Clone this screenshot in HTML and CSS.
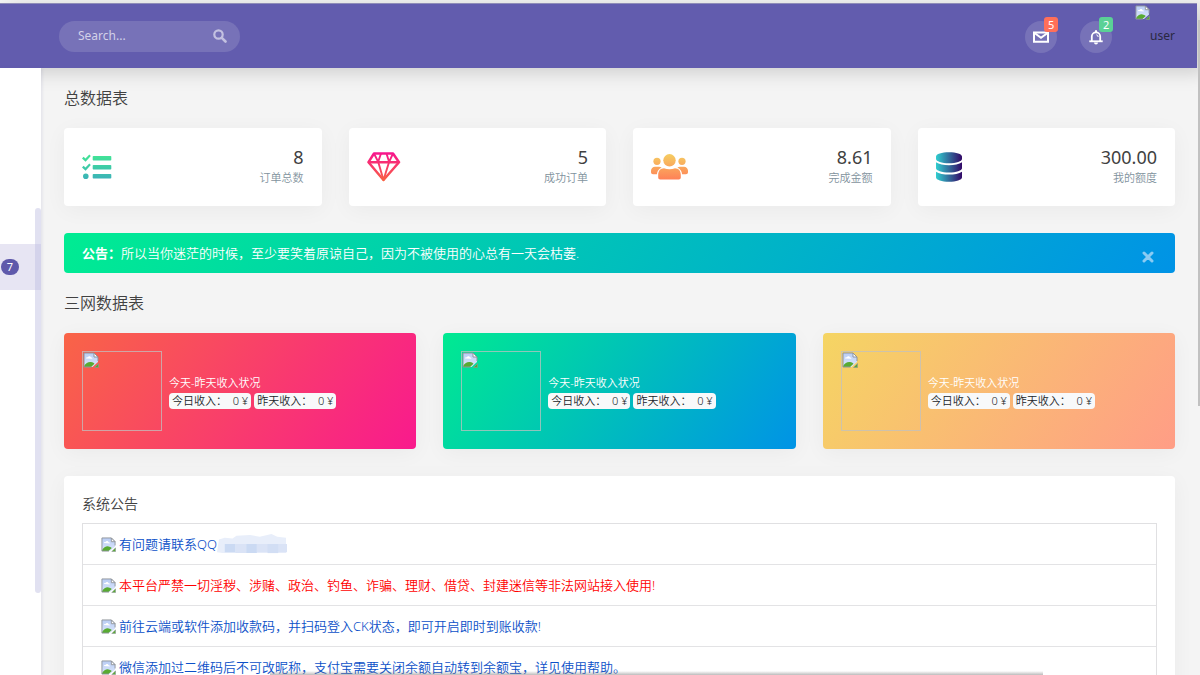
FILE: index.html
```html
<!DOCTYPE html>
<html lang="zh-CN">
<head>
<meta charset="utf-8">
<title>总数据表</title>
<link rel="stylesheet" href="styles.css">
</head>
<body>
<svg class="defs" width="0" height="0" aria-hidden="true">
  <defs>
    <linearGradient id="sky" x1="0" y1="0" x2="0" y2="1"><stop offset="0" stop-color="#b9cdf5"/><stop offset="1" stop-color="#dbe6fb"/></linearGradient>
    <linearGradient id="green" x1="0" y1="0" x2="0" y2="1"><stop offset="0" stop-color="#42e695"/><stop offset="1" stop-color="#3bb2b8"/></linearGradient>
    <linearGradient id="pink" gradientUnits="userSpaceOnUse" x1="0" y1="0" x2="0" y2="30"><stop offset="0" stop-color="#f7138f"/><stop offset="1" stop-color="#f9643f"/></linearGradient>
    <linearGradient id="orange" gradientUnits="userSpaceOnUse" x1="0" y1="0" x2="0" y2="26"><stop offset="0" stop-color="#f5ce62"/><stop offset="1" stop-color="#ff7f57"/></linearGradient>
    <linearGradient id="blue"><stop offset="0" stop-color="#30cfd0"/><stop offset="1" stop-color="#330867"/></linearGradient>
    <symbol id="broken" viewBox="0 0 16 16">
      <path d="M1 1h10l4 4v5L9.500 15H1z" fill="url(#sky)"/>
      <path d="M3 6.500c0-1 1-1.500 1.800-1.200C5.400 3.900 7.600 4 8 5.600c1 0 1.400.5 1.400 1.200z" fill="#fff"/>
      <path d="M1 14c2-3 4.500-4.500 7-4 1.500 0 2.500.8 3.500 1.800L8 15H1z" fill="#58ab32"/>
      <path d="M8.500 15H1V1h10l4 4v4" fill="none" stroke="#8f949b"/>
      <path d="M11 1v4h4z" fill="#fff" stroke="#8f949b"/>
      <path d="M15.500 11.500v4h-4z" fill="#58ab32" stroke="#8f949b" stroke-width=".6"/>
    </symbol>
  </defs>
</svg>

<header class="topbar">
  <form class="search">
    <input class="search-input" type="text" placeholder="Search..." aria-label="Search">
    <button class="search-button" type="button" aria-label="搜索">
      <svg width="14" height="14" viewBox="0 0 14 14"><circle cx="5.500" cy="5.500" r="4.200" fill="none" stroke="currentColor" stroke-width="2.200"/><path d="M8.800 8.800l3.700 3.700" stroke="currentColor" stroke-width="2.600" stroke-linecap="round"/></svg>
    </button>
  </form>
  <nav class="actions">
    <button class="round" type="button" aria-label="消息">
      <svg width="16" height="12" viewBox="0 0 16 12" fill="none" stroke="#fff" stroke-width="2"><path d="M1 1.500h14v9.300H1z"/><path d="M1.500 2L8 6.800 14.500 2"/></svg>
      <span class="count count-red">5</span>
    </button>
    <button class="round" type="button" aria-label="通知">
      <svg width="16" height="16" viewBox="0 0 16 16"><path d="M3.800 12V7.500a4.200 4.200 0 0 1 8.400 0V12" fill="none" stroke="#fff" stroke-width="1.800"/><path d="M1.300 12.300h13.400" stroke="#fff" stroke-width="1.800"/><path d="M7 3V1.300h2V3zM6 13.500h4a2 2 0 0 1-4 0z" fill="#fff"/><path d="M8.300 5.800a2 2 0 0 1 1.800 2.200" fill="none" stroke="#fff"/></svg>
      <span class="count count-green">2</span>
    </button>
    <a class="user" href="#"><svg class="user-icon" width="15" height="15"><use href="#broken"/></svg><span>user</span></a>
  </nav>
</header>

<div class="shell">
  <aside class="sidebar">
    <a class="side-item" href="#"><span class="side-badge">7</span></a>
    <div class="side-scroll"></div>
  </aside>

  <main class="main">
    <h1 class="heading">总数据表</h1>
    <section class="stats">
      <article class="card stat">
        <svg width="30" height="26" viewBox="0 0 30 26"><path fill="url(#green)" d="M11.500 2h17a.8.8 0 0 1 .8.8v2.900a.8.8 0 0 1-.8.800h-17a.8.8 0 0 1-.8-.8V2.800a.8.8 0 0 1 .8-.8zM11.500 11h17a.8.8 0 0 1 .8.8v2.900a.8.8 0 0 1-.8.800h-17a.8.8 0 0 1-.8-.8v-2.900a.8.8 0 0 1 .8-.8zM11.500 20h17a.8.8 0 0 1 .8.8v2.900a.8.8 0 0 1-.8.800h-17a.8.8 0 0 1-.8-.8v-2.900a.8.8 0 0 1 .8-.8zM0 4.400l1.600-1.600 1.900 1.800L7.300.5l1.500 1.500-5.200 5.700zM0 13.400l1.600-1.600 1.900 1.800 3.800-4.100 1.500 1.500-5.200 5.700zM3.800 19.500a2.800 2.800 0 1 1 0 5.600 2.800 2.800 0 0 1 0-5.600z"/></svg>
        <div class="stat-text"><p class="value">8</p><p class="label">订单总数</p></div>
      </article>
      <article class="card stat">
        <svg width="34" height="30" viewBox="0 0 34 30" fill="none" stroke="url(#pink)" stroke-width="2.500" stroke-linejoin="round"><path d="M7 1.500h19l6 8.700L16.500 28 1.500 10.200z"/><path d="M1.500 10.200L31.900 10.300"/><path d="M7 1.500l4.300 8.700L16.500 28 22 10.200l4-8.700M14 1.500l-3 8.700M19.500 1.500l2.700 8.700" stroke-width="1.900"/></svg>
        <div class="stat-text"><p class="value">5</p><p class="label">成功订单</p></div>
      </article>
      <article class="card stat">
        <svg width="37" height="26" viewBox="0 0 37 26" fill="url(#orange)"><circle cx="18.500" cy="6.300" r="6.200"/><circle cx="6" cy="7.300" r="3.600"/><circle cx="31" cy="7.300" r="3.600"/><path d="M13 14.200c3.500 1.300 7.500 1.300 11 0 3.500 0 5.800 2.800 5.800 6.500v2.800c0 1.200-.9 2-2 2H9.200c-1.200 0-2-.8-2-2v-2.800c0-3.700 2.300-6.500 5.800-6.500z"/><path d="M4 12.700h4c1 0 1.900.3 2.600.9-2.800 1.300-4.300 3.600-4.700 6.600H2c-1.100 0-2-.8-2-2v-1.500c0-2.200 1.800-4 4-4zM33 12.700h-4c-1 0-1.900.3-2.600.9 2.800 1.300 4.300 3.600 4.700 6.600H35c1.100 0 2-.8 2-2v-1.500c0-2.200-1.800-4-4-4z"/></svg>
        <div class="stat-text"><p class="value">8.61</p><p class="label">完成金额</p></div>
      </article>
      <article class="card stat">
        <svg width="26" height="30" viewBox="0 0 448 512"><path fill="url(#blue)" d="M448 73.143v45.714C448 159.143 347.667 192 224 192S0 159.143 0 118.857V73.143C0 32.857 100.333 0 224 0s224 32.857 224 73.143zM448 176v102.857C448 319.143 347.667 352 224 352S0 319.143 0 278.857V176c48.125 33.143 136.208 48.572 224 48.572S399.874 209.143 448 176zm0 160v102.857C448 479.143 347.667 512 224 512S0 479.143 0 438.857V336c48.125 33.143 136.208 48.572 224 48.572S399.874 369.143 448 336z"/></svg>
        <div class="stat-text"><p class="value">300.00</p><p class="label">我的额度</p></div>
      </article>
    </section>

    <div class="notice" role="alert">
      <p class="notice-text"><strong>公告：</strong>所以当你迷茫的时候，至少要笑着原谅自己，因为不被使用的心总有一天会枯萎.</p>
      <button class="close" type="button" aria-label="关闭"><svg width="12" height="12" viewBox="0 0 12 12"><path d="M2 2l8 8M10 2l-8 8" stroke="currentColor" stroke-width="3" stroke-linecap="round"/></svg></button>
    </div>

    <h2 class="heading">三网数据表</h2>
    <section class="incomes">
      <article class="card income income-red">
        <div class="picture"><svg width="16" height="16"><use href="#broken"/></svg></div>
        <div><p class="income-title">今天-昨天收入状况</p><p class="pills"><span class="pill">今日收入：  0 ¥</span><span class="pill">昨天收入：  0 ¥</span></p></div>
      </article>
      <article class="card income income-green">
        <div class="picture"><svg width="16" height="16"><use href="#broken"/></svg></div>
        <div><p class="income-title">今天-昨天收入状况</p><p class="pills"><span class="pill">今日收入：  0 ¥</span><span class="pill">昨天收入：  0 ¥</span></p></div>
      </article>
      <article class="card income income-yellow">
        <div class="picture"><svg width="16" height="16"><use href="#broken"/></svg></div>
        <div><p class="income-title">今天-昨天收入状况</p><p class="pills"><span class="pill">今日收入：  0 ¥</span><span class="pill">昨天收入：  0 ¥</span></p></div>
      </article>
    </section>

    <section class="card panel">
      <h2 class="panel-title">系统公告</h2>
      <ul class="list">
        <li class="row"><svg class="row-icon" width="15" height="15"><use href="#broken"/></svg><a href="#">有问题请联系QQ</a>
          <svg width="70" height="20" viewBox="0 0 72 22" preserveAspectRatio="none"><path d="M2 6l6-2 8 1 4-3 14-1 10 2 12-3 6 3 9 1v17H6l-6-1z" fill="#e8eefa"/><path d="M8 11h11v9H8zM30 11h11v10H30z" fill="#cbdaf3"/><path d="M19 11h11v10H19zM41 11h31v9H41z" fill="#dae3f6"/><path d="M52 11h11v10H52z" fill="#d2def4"/></svg></li>
        <li class="row"><svg class="row-icon" width="15" height="15"><use href="#broken"/></svg><a class="warn" href="#">本平台严禁一切淫秽、涉赌、政治、钓鱼、诈骗、理财、借贷、封建迷信等非法网站接入使用!</a></li>
        <li class="row"><svg class="row-icon" width="15" height="15"><use href="#broken"/></svg><a href="#">前往云端或软件添加收款码，并扫码登入CK状态，即可开启即时到账收款!</a></li>
        <li class="row"><svg class="row-icon" width="15" height="15"><use href="#broken"/></svg><a href="#">微信添加过二维码后不可改昵称，支付宝需要关闭余额自动转到余额宝，详见使用帮助。</a></li>
      </ul>
    </section>
  </main>
</div>
<div class="page-scroll"></div>
<div class="edge-shadow"></div>
</body>
</html>
```
FILE: styles.css
```css
* { box-sizing: border-box; }
html { height: 100%; overflow: hidden; }
body {
  margin: 0;
  min-height: 100%;
  padding-top: 3px;
  display: flex;
  flex-direction: column;
  background: #f4f4f4;
  color: #414141;
  font: 350 13px/20px "Noto Sans", "Noto Sans CJK SC", sans-serif;
}
h1, h2, p, ul { margin: 0; padding: 0; font-weight: 350; }
a { color: #0b50c8; text-decoration: none; }
button { border: 0; padding: 0; cursor: pointer; font: inherit; }
svg { display: block; flex: none; }
.defs { position: absolute; }

.topbar {
  position: relative;
  z-index: 1;
  display: flex;
  align-items: center;
  justify-content: space-between;
  height: 65px;
  margin-right: 3px;
  padding: 0 22px 0 59px;
  background: #625cae;
  border-top: 1px solid #8f8cb8;
  box-shadow: 8px 4px 18px rgba(0, 0, 0, .17);
}
.search {
  display: flex;
  align-items: center;
  width: 181px;
  height: 31px;
  padding: 0 13px 0 19px;
  border-radius: 16px;
  background: #7772b8;
}
.search-input {
  flex: 1;
  min-width: 0;
  padding: 0;
  border: 0;
  outline: 0;
  background: transparent;
  color: #fff;
  font: 400 12px/20px "Noto Sans", sans-serif;
}
.search-input::placeholder { color: #d3d1e8; opacity: 1; }
.search-button { background: transparent; color: #c3c1e0; }
.actions { display: flex; align-self: stretch; align-items: center; gap: 23px; }
.round {
  position: relative;
  display: grid;
  place-items: center;
  width: 32px;
  height: 32px;
  margin-top: 2px;
  border-radius: 50%;
  background: #7772b8;
}
.count {
  position: absolute;
  top: -4px;
  right: -1px;
  width: 14px;
  height: 15px;
  border-radius: 3px;
  color: #fff;
  font-size: 11px;
  font-weight: 400;
  line-height: 15px;
}
.count-red { background: #ff6f59; }
.count-green { background: #5ad196; }
.user { display: flex; align-self: stretch; align-items: center; color: #292841; font-weight: 400; font-size: 12px; }
.user-icon { align-self: flex-start; margin-top: 1px; }

.shell { display: flex; flex: 1; }
.sidebar {
  position: relative;
  z-index: 2;
  flex: none;
  width: 41px;
  padding-top: 176px;
  background: #fff;
  box-shadow: 1px 0 3px rgba(90, 90, 150, .14);
}
.side-item { display: flex; align-items: center; height: 46px; padding: 0 1px; background: #e7e5f3; }
.side-badge {
  width: 18px;
  height: 16px;
  border-radius: 8px;
  background: #5f59ab;
  color: #fff;
  font-size: 11px;
  font-weight: 400;
  line-height: 16px;
  text-align: center;
}
.side-scroll {
  position: absolute;
  top: 140px;
  right: 0;
  width: 6px;
  height: 385px;
  border-radius: 3px;
  background: rgba(192, 193, 226, .48);
}

.main { flex: 1; min-width: 0; padding: 18px 25px 28px 23px; }
.heading { margin-bottom: 18px; font-size: 16px; line-height: 24px; }
.card { border-radius: 4px; background: #fff; box-shadow: 0 4px 22px rgba(0, 0, 0, .045); }
.stats { display: grid; grid-template-columns: repeat(4, 1fr); gap: 27px; margin-bottom: 27px; }
.stat { display: flex; align-items: center; justify-content: space-between; padding: 18px; }
.stat-text { text-align: right; }
.value { font-size: 18px; font-weight: 400; line-height: 22px; }
.label { color: #7f929d; font-size: 11px; line-height: 20px; }

.notice {
  display: flex;
  align-items: center;
  justify-content: space-between;
  margin-bottom: 18px;
  padding: 10px 21px 10px 18px;
  border-radius: 4px;
  background: linear-gradient(125deg, #00ec92, #0093e6);
  color: #fff;
}
.notice strong { font-weight: 700; }
.close { background: transparent; color: #8acbf3; margin-top: 8px; }

.incomes { display: grid; grid-template-columns: repeat(3, 1fr); gap: 27px; margin-bottom: 27px; }
.income { display: flex; align-items: center; gap: 7px; padding: 18px; color: #fff; font-size: 11px; line-height: 18px; }
.income-red { background: linear-gradient(125deg, #f96447, #f91a8d); }
.income-green { background: linear-gradient(125deg, #00ea91, #0093e6); }
.income-yellow { background: linear-gradient(125deg, #f5d563, #ff9d86); }
.picture { flex: none; width: 80px; height: 80px; border: 1px solid rgba(192, 192, 192, .75); }
.income-title { line-height: 20px; }
.pills { display: flex; gap: 3px; }
.pill { padding: 0 3px; border-radius: 4px; background: #f8f9fa; color: #212529; line-height: 16px; white-space: pre; }

.panel { padding: 18px; }
.panel-title { margin-bottom: 9px; font-size: 14px; line-height: 20px; }
.list { list-style: none; border: 1px solid #e0e0e2; }
.row { display: flex; align-items: center; padding: 10px 18px; }
.row + .row { border-top: 1px solid #e3e3e5; }
.row-icon { margin-right: 3px; }
.warn { color: #f00; }

.page-scroll { position: fixed; z-index: 3; top: 20px; right: 0; width: 2px; height: 386px; background: #c1c1c1; }
.edge-shadow { position: fixed; z-index: 3; right: 157px; bottom: 0; left: 270px; height: 4px; background: linear-gradient(rgba(120, 120, 120, 0), rgba(120, 120, 120, .5)); }
```
